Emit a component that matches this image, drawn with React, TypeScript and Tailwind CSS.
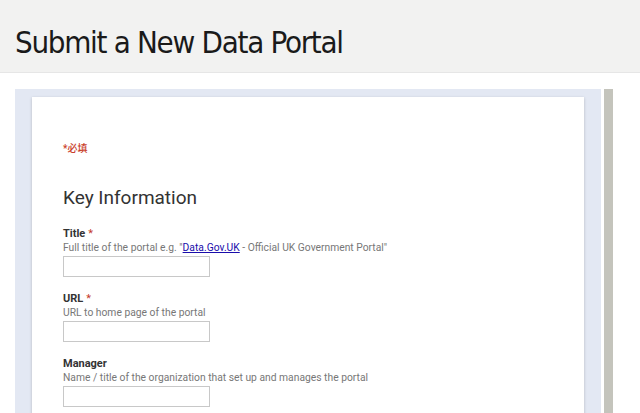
import React from "react";

function Field({
  label,
  required,
  help,
}: {
  label: string;
  required?: boolean;
  help: React.ReactNode;
}) {
  return (
    <div className="mb-[15px]">
      <div className="text-[11px] font-bold leading-[14px] text-[#333]">
        {label}
        {required && <span className="ml-[3px] font-normal text-[#c53929]">*</span>}
      </div>
      <div className="text-[10.3px] leading-[13px] text-[#777]">{help}</div>
      <input
        type="text"
        className="mt-[2px] block h-[21px] w-[147px] border border-[#c8c8c8] bg-white outline-none"
      />
    </div>
  );
}

export default function App() {
  return (
    <div className="h-[413px] w-[640px] overflow-hidden bg-white">
      {/* page header */}
      <div className="h-[73px] border-b border-[#e6e6e6] bg-[#f2f2f1] pl-[15px] pt-[22px]">
        <h1
          className="text-[31px] leading-[40px] tracking-[-1.3px] text-[#1a1a1a]"
          style={{ fontFamily: '"DejaVu Sans Condensed", "Liberation Sans", sans-serif' }}
        >
          Submit a New Data Portal
        </h1>
      </div>

      {/* embedded form frame */}
      <div className="mt-[16px] flex">
        <div className="ml-[15px] h-[330px] w-[586px] bg-[#e3e8f3] pl-[17px] pr-[17px] pt-[8px]">
          <div
            className="h-full bg-white pl-[31px] pt-[45px] shadow-[0_1px_3px_rgba(0,0,0,0.2)]"
            style={{ fontFamily: "Roboto, Arial, sans-serif" }}
          >
            <div
              className="text-[10px] font-medium leading-[14px] text-[#c9402a]"
              style={{ fontFamily: 'Roboto, "Noto Sans CJK SC", sans-serif' }}
            >
              *必填
            </div>
            <h2 className="mt-[29px] text-[19px] leading-[26px] text-[#333]">Key Information</h2>
            <div className="mt-[16px]">
              <Field
                label="Title"
                required
                help={
                  <>
                    Full title of the portal e.g. "
                    <a href="#" className="text-[#1a0dab] underline">
                      Data.Gov.UK
                    </a>{" "}
                    - Official UK Government Portal"
                  </>
                }
              />
              <Field label="URL" required help="URL to home page of the portal" />
              <Field
                label="Manager"
                help="Name / title of the organization that set up and manages the portal"
              />
            </div>
          </div>
        </div>
        <div className="ml-[3px] h-[330px] w-[9px] bg-[#c4c4bc]" />
      </div>
    </div>
  );
}
